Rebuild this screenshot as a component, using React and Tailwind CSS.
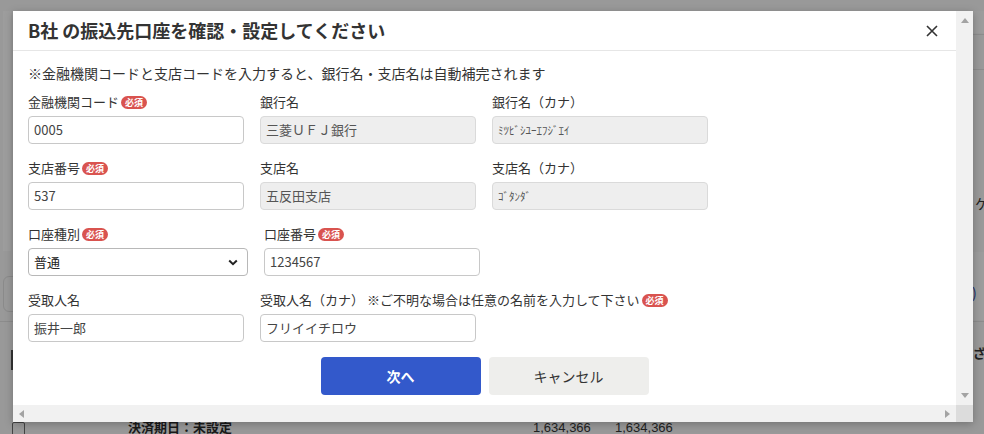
import React from "react";

const Badge = () => (
  <span className="ml-[2px] inline-flex h-[13px] w-[26px] items-center justify-center rounded-full bg-[#d9534f] text-[9px] font-bold leading-none text-white">
    必須
  </span>
);

const Label = ({ children, req, className = "" }) => (
  <div className={"flex h-[20px] items-center text-[13px] text-[#333] mb-[4px] whitespace-nowrap " + className}>
    <span>{children}</span>
    {req && <Badge />}
  </div>
);

const Input = ({ value, ro, small, w = "w-[216px]" }) => (
  <div
    className={
      "flex h-[28px] items-center rounded-[4px] border px-[5px] " +
      w +
      " " +
      (ro ? "border-[#dadada] bg-[#eeeeee] text-[#555]" : "border-[#c8c8c8] bg-white text-[#444]") +
      " " +
      (small ? "text-[11px]" : "text-[13px]")
    }
  >
    {value}
  </div>
);

const Field = ({ label, req, value, ro, small, w }) => (
  <div className="flex flex-col">
    <Label req={req}>{label}</Label>
    <Input value={value} ro={ro} small={small} w={w} />
  </div>
);

const Tri = ({ dir }) => {
  const pts = {
    up: "0,5 4,0 8,5",
    down: "0,0 8,0 4,5",
    left: "5,0 5,8 0,4",
    right: "0,0 0,8 5,4",
  }[dir];
  const vb = dir === "up" || dir === "down" ? "0 0 8 5" : "0 0 5 8";
  const size = dir === "up" || dir === "down" ? "w-[8px] h-[5px]" : "w-[5px] h-[8px]";
  return (
    <svg viewBox={vb} className={size}>
      <polygon points={pts} fill="#a3a3a3" />
    </svg>
  );
};

export default function App() {
  return (
    <div className="relative h-[434px] w-[984px] overflow-hidden bg-[#999999] font-['Noto_Sans_CJK_JP','Noto_Sans',sans-serif]">
      {/* background page behind overlay */}
      <div className="absolute left-[3px] top-[11px] h-[240px] w-[8px] bg-[#9d9d9d]" />
      <div className="absolute left-[3px] top-[276px] h-[36px] w-[20px] rounded-[6px] border border-[#8a8a8a]" />
      <div className="absolute left-[0px] top-[321px] h-px w-[14px] bg-[#8c8c8c]" />
      <div className="absolute left-[11px] top-[350px] h-[20px] w-[3px] bg-[#333]" />
      <div className="absolute right-0 top-[11px] h-[22px] w-[12px] bg-[#9c9c9c]" />
      <div className="absolute right-0 top-[34px] h-px w-[12px] bg-[#8c8c8c]" />
      <div className="absolute right-0 top-[69px] h-px w-[12px] bg-[#8c8c8c]" />
      <div className="absolute left-[975px] top-[196px] text-[14px] leading-none text-[#222]">ケ</div>
      <div className="absolute right-0 top-[252px] h-[68px] w-[12px] bg-[#9c9c9c]" />
      <div className="absolute left-[972px] top-[285px] text-[14px] leading-none text-[#1a2a66]">)</div>
      <div className="absolute right-0 top-[321px] h-px w-[12px] bg-[#8c8c8c]" />
      <div className="absolute left-[973px] top-[346px] text-[13px] font-bold leading-none text-[#222]">ざ</div>
      <div className="absolute left-[12px] top-[422px] h-[14px] w-[13px] rounded-[2px] border border-[#444] bg-[#999]" />
      <div className="absolute left-[128px] top-[420px] text-[13px] font-bold leading-none text-[#1a1a1a]">決済期日：未設定</div>
      <div className="absolute left-[533px] top-[421px] font-['Liberation_Sans',sans-serif] text-[13px] leading-none text-[#222]">1,634,366</div>
      <div className="absolute left-[615px] top-[421px] font-['Liberation_Sans',sans-serif] text-[13px] leading-none text-[#222]">1,634,366</div>

      {/* dialog */}
      <div className="absolute left-[13px] top-[11px] flex h-[411px] w-[960px] flex-col bg-white shadow-[0_2px_8px_rgba(0,0,0,0.25)]">
        <div className="flex min-h-0 flex-1">
          <div className="flex min-w-0 flex-1 flex-col">
            {/* header */}
            <div className="flex h-[40px] shrink-0 items-center justify-between border-b border-[#e6e6e6] pl-[15px] pr-[18px]">
              <div className="text-[18px] font-bold text-[#333]">B社 の振込先口座を確認・設定してください</div>
              <svg viewBox="0 0 12 12" className="h-[12px] w-[12px]">
                <path d="M1 1L11 11M11 1L1 11" stroke="#333" strokeWidth="1.6" />
              </svg>
            </div>
            {/* body */}
            <div className="flex flex-col pl-[15px] pt-[12px]">
              <div className="h-[20px] text-[14px] leading-[20px] text-[#333] mb-[9px]">
                ※金融機関コードと支店コードを入力すると、銀行名・支店名は自動補完されます
              </div>
              <div className="flex flex-col gap-[14px]">
                <div className="flex gap-[16px]">
                  <Field label="金融機関コード" req value="0005" />
                  <Field label="銀行名" value="三菱ＵＦＪ銀行" ro />
                  <Field label="銀行名（カナ）" value="ﾐﾂﾋﾞｼﾕｰｴﾌｼﾞｴｲ" ro small />
                </div>
                <div className="flex gap-[16px]">
                  <Field label="支店番号" req value="537" />
                  <Field label="支店名" value="五反田支店" ro />
                  <Field label="支店名（カナ）" value="ｺﾞﾀﾝﾀﾞ" ro small />
                </div>
                <div className="flex gap-[16px]">
                  <div className="flex flex-col">
                    <Label req>口座種別</Label>
                    <div className="flex h-[28px] w-[220px] items-center justify-between rounded-[4px] border border-[#b8b8b8] bg-white pl-[5px] pr-[9px] text-[13px] text-[#222]">
                      <span>普通</span>
                      <svg viewBox="0 0 10 7" className="h-[7px] w-[10px]">
                        <path d="M1.2 1.5L5 5.2L8.8 1.5" stroke="#222" strokeWidth="2" fill="none" />
                      </svg>
                    </div>
                  </div>
                  <Field label="口座番号" req value="1234567" />
                </div>
                <div className="flex gap-[16px]">
                  <Field label="受取人名" value="振井一郎" />
                  <div className="flex flex-col">
                    <Label req>受取人名（カナ） ※ご不明な場合は任意の名前を入力して下さい</Label>
                    <Input value="フリイイチロウ" />
                  </div>
                </div>
              </div>
              <div className="mt-[15px] flex justify-center gap-[8px] pr-[15px]">
                <button className="h-[38px] w-[160px] rounded-[4px] bg-[#3359cb] text-[14px] font-bold text-white">次へ</button>
                <button className="h-[38px] w-[160px] rounded-[4px] bg-[#eeeeec] text-[14px] text-[#333]">キャンセル</button>
              </div>
            </div>
          </div>
          {/* vertical scrollbar */}
          <div className="flex w-[17px] shrink-0 flex-col items-center justify-between bg-[#f1f1f1] py-[7px]">
            <Tri dir="up" />
            <Tri dir="down" />
          </div>
        </div>
        {/* horizontal scrollbar */}
        <div className="flex h-[17px] shrink-0">
          <div className="flex flex-1 items-center justify-between bg-[#f1f1f1] px-[6px]">
            <Tri dir="left" />
            <Tri dir="right" />
          </div>
          <div className="w-[17px] bg-[#dcdcdc]" />
        </div>
      </div>
    </div>
  );
}
